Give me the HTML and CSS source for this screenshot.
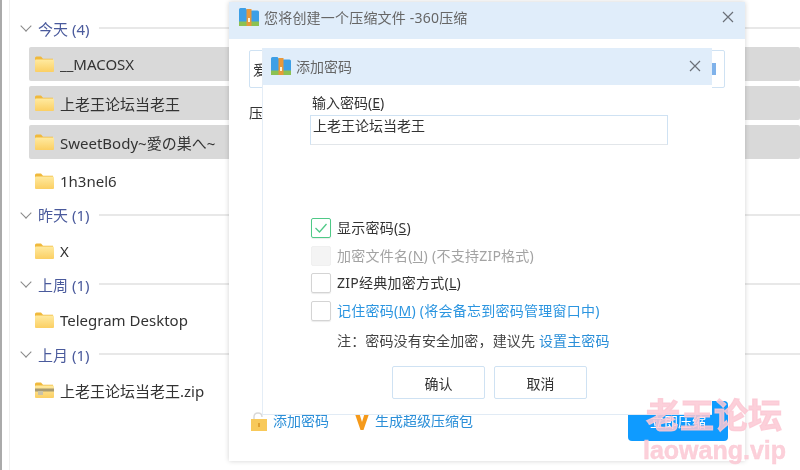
FILE: index.html
```html
<!DOCTYPE html>
<html lang="zh-CN">
<head>
    <meta charset="utf-8">
    <title>360压缩</title>
    <link rel="stylesheet" href="styles.css">
</head>
<body>
    <svg class="defs" width="0" height="0">
        <defs>
            <linearGradient id="mappe" x1="0" y1="0" x2="0" y2="1">
                <stop offset="0" stop-color="#ffeaa0"/>
                <stop offset="1" stop-color="#fbcf63"/>
            </linearGradient>
            <symbol id="folder" viewBox="0 0 19 16">
                <path d="M0 2q0-1.500 1.500-1.500h4.500l2 2.300h10v2H0z" fill="#f0b93c"/>
                <rect x="0" y="3.500" width="19" height="12.500" rx="1" fill="url(#mappe)"/>
            </symbol>
            <symbol id="arkiv" viewBox="0 0 20 18">
                <path d="M0 1.500q0-1.500 1.500-1.500h5l2 2.500h10q1.500 0 1.500 1.500v10H0z" fill="#3d9fe6"/>
                <rect x="0" y="13.500" width="20" height="4.500" fill="#8cc152"/>
                <rect x="7.500" y="1" width="5" height="17" fill="#e8983a"/>
                <rect x="9" y="10" width="2" height="4" fill="#fff3d6"/>
            </symbol>
        </defs>
    </svg>

    <main class="explorer">
        <section class="gruppe">
            <h2 class="gruppe-titel"><span class="pil"></span>今天 (4)<span class="streg"></span></h2>
            <div class="raekke valgt"><svg class="mappe"><use href="#folder"/></svg>__MACOSX</div>
            <div class="raekke valgt"><svg class="mappe"><use href="#folder"/></svg>上老王论坛当老王</div>
            <div class="raekke valgt"><svg class="mappe"><use href="#folder"/></svg>SweetBody~愛の巣へ~</div>
            <div class="raekke"><svg class="mappe"><use href="#folder"/></svg>1h3nel6</div>
        </section>
        <section class="gruppe">
            <h2 class="gruppe-titel"><span class="pil"></span>昨天 (1)<span class="streg"></span></h2>
            <div class="raekke"><svg class="mappe"><use href="#folder"/></svg>X</div>
        </section>
        <section class="gruppe">
            <h2 class="gruppe-titel"><span class="pil"></span>上周 (1)<span class="streg"></span></h2>
            <div class="raekke"><svg class="mappe"><use href="#folder"/></svg>Telegram Desktop</div>
        </section>
        <section class="gruppe">
            <h2 class="gruppe-titel"><span class="pil"></span>上月 (1)<span class="streg"></span></h2>
            <div class="raekke">
                <svg class="mappe" viewBox="0 0 19 16">
                    <use href="#folder" width="19" height="16"/>
                    <rect x="0" y="6.500" width="19" height="3" fill="#a89a70"/>
                    <rect x="3" y="9" width="5" height="4" fill="#c9c2a8"/>
                </svg>上老王论坛当老王.zip
            </div>
        </section>
    </main>

    <div class="vindue ydre">
        <div class="titel">
            <svg class="arkiv"><use href="#arkiv"/></svg>
            <span>您将创建一个压缩文件 -360压缩</span>
            <svg class="luk" viewBox="0 0 12 12"><path d="M1 1l10 10M11 1L1 11"/></svg>
        </div>
        <div class="ydre-indhold">
            <div class="sti"><span>爱</span><span class="sti-ikon"></span></div>
            <div class="sti-label">压</div>
            <div class="bund">
                <svg class="laas" viewBox="0 0 16 19">
                    <path d="M3 9V5q0-4 4-4t4 4" fill="none" stroke="#d9d9d9" stroke-width="1.500"/>
                    <rect y="7" width="16" height="12" fill="#f8c95a"/>
                    <rect x="7" y="11" width="2" height="4" fill="#e0a030"/>
                </svg>
                <a class="link">添加密码</a>
                <svg class="vip" viewBox="0 0 14 16"><path d="M0 0h4.500l2.500 8 2.500-8H14L8.500 16h-3z" fill="#f59a1b"/></svg>
                <a class="link">生成超级压缩包</a>
                <button class="primaer">立即压缩</button>
            </div>
        </div>
    </div>

    <div class="vindue indre">
        <div class="titel">
            <svg class="arkiv"><use href="#arkiv"/></svg>
            <span>添加密码</span>
            <svg class="luk" viewBox="0 0 12 12"><path d="M1 1l10 10M11 1L1 11"/></svg>
        </div>
        <div class="indre-indhold">
            <label class="felt-label">输入密码(<u>E</u>)</label>
            <div class="felt">上老王论坛当老王</div>
            <ul class="valg">
                <li>
                    <span class="boks tjek"><svg viewBox="0 0 14 12"><path d="M1.500 6l4 4 7-8"/></svg></span>
                    <span class="tekst">显示密码(<u>S</u>)</span>
                </li>
                <li class="slaaet-fra"><span class="boks"></span><span class="tekst">加密文件名(<u>N</u>) (不支持ZIP格式)</span></li>
                <li><span class="boks"></span><span class="tekst">ZIP经典加密方式(<u>L</u>)</span></li>
                <li class="blaa"><span class="boks"></span><span class="tekst">记住密码(<u>M</u>) (将会备忘到密码管理窗口中)</span></li>
            </ul>
            <p class="note">注：密码没有安全加密，建议先 <a class="link">设置主密码</a></p>
            <div class="knapper">
                <button class="knap">确认</button>
                <button class="knap">取消</button>
            </div>
        </div>
    </div>

    <div class="vandmaerke">
        <div class="vm-navn">老王论坛</div>
        <div class="vm-url">laowang.vip</div>
    </div>
</body>
</html>
```

FILE: styles.css
```css
* {
    box-sizing: border-box;
}

html,
body {
    margin: 0;
    height: 470px;
    overflow: hidden;
    background: white;
}

body {
    position: relative;
    border-left: 2px solid #aaa;
    font-family: "Noto Sans", "Noto Sans CJK SC", sans-serif;
    font-size: 14px;
    color: #333;
    filter: blur(0.35px);
}

.defs {
    position: absolute;
}

/* filliste bagved */
.explorer {
    height: 470px;
    margin-left: 7px;
    padding: 12px 0 0 0;
    border-left: 1px solid #efefef;
    display: flex;
    flex-direction: column;
    gap: 0.7px;
}

.gruppe {
    display: flex;
    flex-direction: column;
    gap: 5px;
}

.gruppe-titel {
    display: flex;
    align-items: center;
    height: 30px;
    margin: 0;
    padding: 2px 0 0 12px;
    font-size: 15px;
    font-weight: normal;
    color: #4a5a9c;
    white-space: nowrap;
}

.pil {
    width: 8px;
    height: 8px;
    margin: -4px 8px 0 0;
    border-right: 1px solid #888;
    border-bottom: 1px solid #888;
    transform: rotate(45deg);
}

.streg {
    flex: 1;
    height: 2px;
    margin-left: 10px;
    background: #e8e8e8;
}

.raekke {
    display: flex;
    align-items: center;
    height: 34px;
    margin-left: 19px;
    padding: 0 0 0 6px;
    font-size: 15px;
    color: #333;
}

.valgt {
    background: #d9d9d9;
    border-radius: 2px;
}

.mappe {
    width: 19px;
    height: 16px;
    margin: 0 6px 0 0;
}

/* vinduer */
.vindue {
    position: absolute;
    display: flex;
    flex-direction: column;
    background: white;
}

.ydre {
    left: 227px;
    top: 2px;
    width: 516px;
    height: 459px;
    box-shadow: 0 0 5px rgba(0, 0, 0, 0.18);
}

.indre {
    left: 260px;
    top: 48px;
    width: 450px;
    height: 367px;
    border-left: 1px solid #e4edf6;
    border-bottom: 1px solid #e1ebf5;
}

.titel {
    display: flex;
    align-items: center;
    flex: none;
    height: 37px;
    padding: 0 10px;
    background: #e0edfa;
    color: #666;
    font-size: 14px;
}

.ydre .titel {
    padding-bottom: 7px;
    letter-spacing: 0.2px;
}

.indre .titel {
    padding-left: 8px;
    padding-bottom: 2px;
}

.arkiv {
    width: 20px;
    height: 18px;
    margin-right: 5px;
}

.luk {
    width: 12px;
    height: 12px;
    margin: 0 1px 0 auto;
    fill: none;
    stroke: #6b7078;
    stroke-width: 1.200;
}

.ydre-indhold {
    flex: 1;
    display: flex;
    flex-direction: column;
    padding: 11px 20px 20px 20px;
}

.sti {
    display: flex;
    justify-content: space-between;
    align-items: center;
    height: 38px;
    padding: 0 8px 0 3px;
    border: 1px solid #cfe2f3;
    border-radius: 2px;
}

.sti-ikon {
    width: 4px;
    height: 12px;
    background: #7fb2ea;
}

.sti-label {
    margin-top: 14px;
}

.bund {
    display: flex;
    align-items: center;
    margin-top: auto;
    height: 40px;
}

.bund .link {
    margin-top: -3px;
}

.laas {
    width: 16px;
    height: 19px;
    margin: 0 6px 0 2px;
}

.vip {
    width: 14px;
    height: 16px;
    margin: 2px 6px 0 26px;
}

.link {
    color: #2b8fd8;
}

.primaer {
    width: 100px;
    height: 40px;
    margin-left: auto;
    margin-right: -3px;
    border: none;
    border-radius: 4px;
    background: #0f9bff;
    color: white;
    font-family: inherit;
    font-size: 14px;
}

.indre-indhold {
    flex: 1;
    display: flex;
    flex-direction: column;
    padding: 8px 44px 0 47px;
}

.felt-label {
    line-height: 20px;
    margin-left: 2px;
}

.felt {
    height: 30px;
    margin-top: 2px;
    padding: 0 2px;
    line-height: 19px;
    border: 1px solid #cfe2f3;
    border-bottom-color: #e2e6ea;
}

.valg {
    list-style: none;
    margin: 73px 0 0 1px;
    padding: 0;
    display: flex;
    flex-direction: column;
    gap: 7.7px;
    letter-spacing: 0.25px;
}

.valg li {
    display: flex;
    align-items: center;
    height: 20px;
    white-space: pre;
}

.tekst {
    padding-bottom: 2px;
}

.boks {
    flex: none;
    width: 20px;
    height: 20px;
    margin-right: 6px;
    border: 1px solid #d4d4d4;
    border-radius: 2px;
    box-shadow: 0 1px 1px rgba(0, 0, 0, 0.08);
}

.tjek {
    display: flex;
    align-items: center;
    justify-content: center;
    border-color: #4fc987;
}

.tjek svg {
    width: 14px;
    height: 12px;
    fill: none;
    stroke: #4fc987;
    stroke-width: 1.300;
}

.slaaet-fra {
    color: #a3a3a3;
}

.slaaet-fra .boks {
    background: #f4f4f4;
    border-color: #f0f0f0;
    box-shadow: none;
}

.blaa {
    color: #2b95e0;
}

.note {
    margin: 10px 0 0 27px;
    line-height: 20px;
    color: #444;
    letter-spacing: 0.15px;
}

.knapper {
    display: flex;
    justify-content: center;
    gap: 9px;
    margin: 15px 0 0 0;
    padding-left: 1px;
}

.knap {
    width: 93px;
    height: 33px;
    border: 1px solid #cfe2f3;
    border-radius: 2px;
    background: white;
    color: #333;
    font-family: inherit;
    font-size: 14px;
}

/* vandmaerke ovenpaa alt */
.vandmaerke {
    position: absolute;
    left: 641px;
    top: 392px;
    width: 142px;
    text-align: center;
    color: rgba(251, 200, 212, 0.85);
    -webkit-text-stroke: 1.2px rgba(251, 200, 212, 0.85);
    pointer-events: none;
}

.vm-navn {
    font-family: "Noto Sans CJK SC", sans-serif;
    font-size: 34px;
    font-weight: bold;
    line-height: 44px;
}

.vm-url {
    font-size: 25px;
    line-height: 28px;
    font-family: "Liberation Sans", sans-serif;
    font-weight: bold;
    -webkit-text-stroke-width: 0.4px;
}
```
